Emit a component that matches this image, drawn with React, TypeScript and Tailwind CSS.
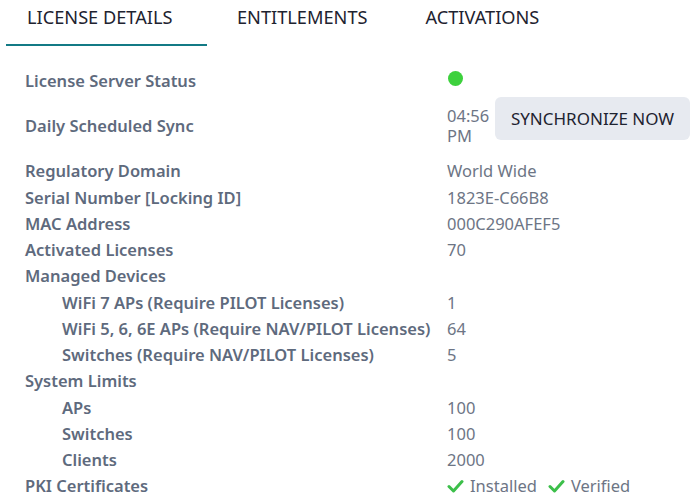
import React from "react";

const Check = () => (
  <svg width="17" height="14" viewBox="0 0 17 14" className="shrink-0">
    <path d="M2 7.5 L6.5 12 L15 2.5" fill="none" stroke="#3cbf4a" strokeWidth="3" strokeLinecap="round" strokeLinejoin="round" />
  </svg>
);

const Row = ({ label, value, indent }: { label: string; value: React.ReactNode; indent?: boolean }) => (
  <div className="flex h-[26.25px] items-center">
    <div className={`w-[422px] shrink-0 font-semibold text-[#5e6a7d] ${indent ? "pl-[37px]" : ""}`}>{label}</div>
    <div className="text-[#6d7585]">{value}</div>
  </div>
);

export default function App() {
  return (
    <div className="w-[697px] h-[500px] overflow-hidden bg-white text-[16.5px] leading-[26.25px]" style={{ fontFamily: '"Noto Sans", "Open Sans", sans-serif' }}>
      <div className="flex h-[46px] text-[18.2px] text-[#1e2330]">
        <div className="ml-[6px] w-[201px] h-[46px] border-b-2 border-[#137a85] pt-[4px] pl-[21px] leading-[26px]">LICENSE DETAILS</div>
        <div className="pl-[30px] pt-[4px] leading-[26px]">ENTITLEMENTS</div>
        <div className="pl-[58px] pt-[4px] leading-[26px]">ACTIVATIONS</div>
      </div>
      <div className="pl-[25px] pt-[22px]">
        <div className="flex h-[26.25px] items-center">
          <div className="w-[422px] shrink-0 font-semibold text-[#5e6a7d]">License Server Status</div>
          <div className="w-[15px] h-[15px] rounded-full bg-[#3dd13d] ml-[1px] -mt-[6px]"></div>
        </div>
        <div className="mt-[3px] flex h-[58px] items-center">
          <div className="w-[422px] shrink-0 font-semibold text-[#5e6a7d]">Daily Scheduled Sync</div>
          <div className="flex h-full items-start">
            <div className="w-[46px] mt-[9px] leading-[20px] text-[#6d7585]">04:56 PM</div>
            <button className="ml-[2px] h-[43px] w-[195px] rounded-md bg-[#e7eaf0] text-[17px] text-[#1e2330]">SYNCHRONIZE NOW</button>
          </div>
        </div>
        <div className="mt-[3px]">
          <Row label="Regulatory Domain" value="World Wide" />
          <Row label="Serial Number [Locking ID]" value="1823E-C66B8" />
          <Row label="MAC Address" value="000C290AFEF5" />
          <Row label="Activated Licenses" value="70" />
          <Row label="Managed Devices" value="" />
          <Row label="WiFi 7 APs (Require PILOT Licenses)" value="1" indent />
          <Row label="WiFi 5, 6, 6E APs (Require NAV/PILOT Licenses)" value="64" indent />
          <Row label="Switches (Require NAV/PILOT Licenses)" value="5" indent />
          <Row label="System Limits" value="" />
          <Row label="APs" value="100" indent />
          <Row label="Switches" value="100" indent />
          <Row label="Clients" value="2000" indent />
          <Row
            label="PKI Certificates"
            value={
              <div className="flex items-center">
                <Check />
                <span className="ml-[6px]">Installed</span>
                <span className="ml-[11px]"><Check /></span>
                <span className="ml-[6px]">Verified</span>
              </div>
            }
          />
        </div>
      </div>
    </div>
  );
}
